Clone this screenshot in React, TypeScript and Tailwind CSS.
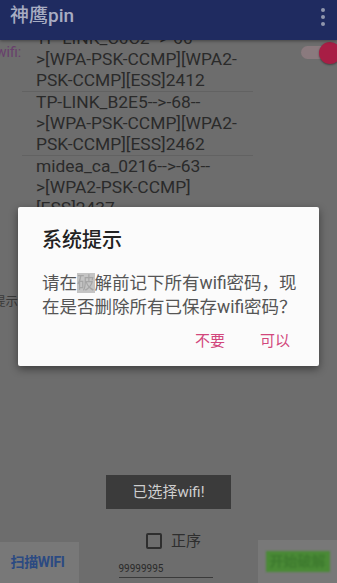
import React from "react";

const font = { fontFamily: '"Roboto", "Noto Sans CJK SC", sans-serif' };

export default function App() {
  return (
    <div
      className="relative w-[337px] h-[583px] overflow-hidden bg-[#6d6d6d] flex flex-col"
      style={font}
    >
      {/* App bar */}
      <div className="h-[40px] shrink-0 bg-[#1f2b60] flex items-start justify-between pl-[10px] pr-[12px] pt-[6px] shadow-[0_1px_3px_rgba(0,0,0,0.4)] z-10">
        <span className="text-[19px] text-[#a8adc2] leading-[20px] font-medium">神鹰pin</span>
        <div className="flex flex-col gap-[3px] items-center pt-[2px]">
          <span className="w-[4px] h-[4px] rounded-full bg-[#9096ad]" />
          <span className="w-[4px] h-[4px] rounded-full bg-[#9096ad]" />
          <span className="w-[4px] h-[4px] rounded-full bg-[#9096ad]" />
        </div>
      </div>

      {/* Body */}
      <div className="flex-1 flex overflow-hidden">
        <div className="w-[22px] shrink-0 flex flex-col overflow-hidden">
          <span className="mt-[3px] -ml-[4px] text-[14px] text-[#683e6c] leading-[18px]">wifi:</span>
          <span className="mt-[232px] -ml-[7px] text-[12.5px] text-[#3a3a3a] leading-[18px] whitespace-nowrap">提示</span>
        </div>
        <div className="w-[231px] shrink-0 overflow-hidden h-[175px]">
          <div className="-mt-[12px] text-[17.4px] leading-[21px] text-[#2a2a2a] whitespace-nowrap">
            <div className="pl-[14px] border-b border-[#626262]">
              <div>TP-LINK_C0C2--&gt;-60--</div>
              <div>&gt;[WPA-PSK-CCMP][WPA2-</div>
              <div>PSK-CCMP][ESS]2412</div>
            </div>
            <div className="pl-[14px] border-b border-[#626262]">
              <div>TP-LINK_B2E5--&gt;-68--</div>
              <div>&gt;[WPA-PSK-CCMP][WPA2-</div>
              <div>PSK-CCMP][ESS]2462</div>
            </div>
            <div className="pl-[14px]">
              <div>midea_ca_0216--&gt;-63--</div>
              <div>&gt;[WPA2-PSK-CCMP]</div>
              <div>[ESS]2437</div>
            </div>
          </div>
        </div>
        <div className="flex-1 flex justify-end">
          <div className="relative mt-0 w-[44px] h-[26px] mr-[-6px]">
            <div className="absolute left-[2px] top-[6px] w-[34px] h-[13px] rounded-full bg-[#8a7a7e]" />
            <div className="absolute left-[20px] top-[2px] w-[22px] h-[22px] rounded-full bg-[#a81e45] shadow-[0_1px_2px_rgba(0,0,0,0.4)]" />
          </div>
        </div>
      </div>

      {/* Bottom */}
      <div className="h-[52px] shrink-0 flex items-stretch">
        <div className="w-[79px] mt-[11px] bg-[#787878] flex items-center justify-center">
          <span className="text-[14px] font-bold text-[#2b4a82] tracking-tight mr-[4px]">扫描WIFI</span>
        </div>
        <div className="flex-1 flex flex-col items-center">
          <div className="flex items-center gap-[9px] ml-[10px]">
            <span className="w-[16px] h-[16px] border-2 border-[#2e2e2e] rounded-[2px]" />
            <span className="text-[15px] text-[#2e2e2e] leading-[20px]">正序</span>
          </div>
          <div className="mt-[12px] w-[94px] ml-[-6px] border-b border-[#3a3a3a] text-[10px] leading-[12px] text-[#2a2a2a] pb-[2px]">
            99999995
          </div>
        </div>
        <div className="w-[79px] mt-[9px] bg-[#787878] flex items-center justify-center">
          <span className="text-[14px] font-bold text-[#3d7a2e] bg-[#4a8a36] px-[4px] blur-[1px]">开始破解</span>
        </div>
      </div>

      {/* Toast */}
      <div className="absolute left-[106px] top-[475px] w-[125px] h-[34px] bg-[#3b3b3b] flex items-center justify-center">
        <span className="text-[15px] text-[#cfcfcf]">已选择wifi!</span>
      </div>

      {/* Dialog */}
      <div className="absolute left-[18px] top-[207px] w-[301px] h-[159px] bg-[#fbfbfb] rounded-[2px] shadow-[0_3px_8px_rgba(0,0,0,0.45)] flex flex-col pl-[24px] pr-[10px]">
        <div className="mt-[20px] text-[20px] leading-[26px] text-[#222222] font-medium">系统提示</div>
        <div className="mt-[18px] text-[17.5px] leading-[24px] text-[#555555]">
          请在<span className="bg-[#c4c4c4] text-[#a5a5a5] blur-[0.6px]">破</span>解前记下所有wifi密码，现在是否删除所有已保存wifi密码？
        </div>
        <div className="flex-1" />
        <div className="flex justify-end gap-[35px] pr-[19px] pb-[14px]">
          <span className="text-[15px] text-[#d2477c]">不要</span>
          <span className="text-[15px] text-[#d2477c]">可以</span>
        </div>
      </div>
    </div>
  );
}
